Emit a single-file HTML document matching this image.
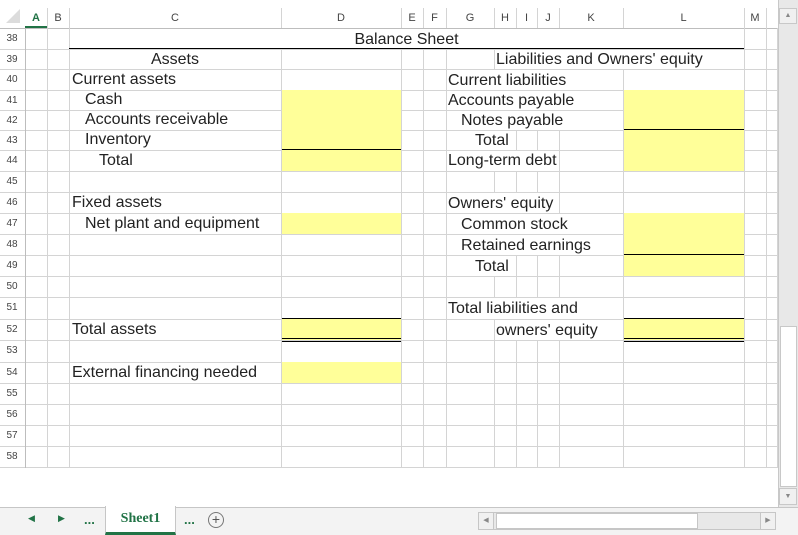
<!DOCTYPE html>
<html><head><meta charset="utf-8"><style>
*{margin:0;padding:0;box-sizing:border-box}
body{width:798px;height:535px;overflow:hidden;background:#fff;font-family:"Liberation Sans",Arial,sans-serif;position:relative}
.a{position:absolute}
.h{position:absolute;height:1px;background:#d4d4d4}
.v{position:absolute;width:1px;background:#d4d4d4}
.y{position:absolute;background:#ffff99}
.k{position:absolute;height:1px;background:#000}
.t{position:absolute;font-size:16px;color:#222;white-space:nowrap;line-height:20px}
.ch{position:absolute;top:10px;font-size:11px;color:#444;text-align:center;line-height:16px}
.rh{position:absolute;left:0;width:24px;font-size:10px;color:#444;text-align:center;line-height:21px}
</style></head><body>
<div class="a" style="left:6px;top:9px;width:0;height:0;border-left:14px solid transparent;border-bottom:14px solid #dcdcdc"></div>
<div class="h" style="left:0;top:28px;width:777px;background:#bdbdbd"></div>
<div class="a" style="left:25px;top:26px;width:22px;height:2px;background:#217346"></div>
<div class="ch" style="left:25px;width:22px;color:#217346;font-weight:bold">A</div>
<div class="ch" style="left:47px;width:22px">B</div>
<div class="ch" style="left:69px;width:212px">C</div>
<div class="ch" style="left:281px;width:120px">D</div>
<div class="ch" style="left:401px;width:22px">E</div>
<div class="ch" style="left:423px;width:23px">F</div>
<div class="ch" style="left:446px;width:48px">G</div>
<div class="ch" style="left:494px;width:22px">H</div>
<div class="ch" style="left:516px;width:21px">I</div>
<div class="ch" style="left:537px;width:22px">J</div>
<div class="ch" style="left:559px;width:64px">K</div>
<div class="ch" style="left:623px;width:121px">L</div>
<div class="ch" style="left:744px;width:22px">M</div>
<div class="v" style="left:47px;top:8px;height:20px"></div>
<div class="v" style="left:69px;top:8px;height:20px"></div>
<div class="v" style="left:281px;top:8px;height:20px"></div>
<div class="v" style="left:401px;top:8px;height:20px"></div>
<div class="v" style="left:423px;top:8px;height:20px"></div>
<div class="v" style="left:446px;top:8px;height:20px"></div>
<div class="v" style="left:494px;top:8px;height:20px"></div>
<div class="v" style="left:516px;top:8px;height:20px"></div>
<div class="v" style="left:537px;top:8px;height:20px"></div>
<div class="v" style="left:559px;top:8px;height:20px"></div>
<div class="v" style="left:623px;top:8px;height:20px"></div>
<div class="v" style="left:744px;top:8px;height:20px"></div>
<div class="v" style="left:766px;top:8px;height:20px"></div>

<div class="h" style="left:0;top:49px;width:777px"></div>
<div class="h" style="left:0;top:69px;width:777px"></div>
<div class="h" style="left:0;top:90px;width:777px"></div>
<div class="h" style="left:0;top:110px;width:777px"></div>
<div class="h" style="left:0;top:130px;width:777px"></div>
<div class="h" style="left:0;top:150px;width:777px"></div>
<div class="h" style="left:0;top:171px;width:777px"></div>
<div class="h" style="left:0;top:192px;width:777px"></div>
<div class="h" style="left:0;top:213px;width:777px"></div>
<div class="h" style="left:0;top:234px;width:777px"></div>
<div class="h" style="left:0;top:255px;width:777px"></div>
<div class="h" style="left:0;top:276px;width:777px"></div>
<div class="h" style="left:0;top:297px;width:777px"></div>
<div class="h" style="left:0;top:319px;width:777px"></div>
<div class="h" style="left:0;top:340px;width:777px"></div>
<div class="h" style="left:0;top:362px;width:777px"></div>
<div class="h" style="left:0;top:383px;width:777px"></div>
<div class="h" style="left:0;top:404px;width:777px"></div>
<div class="h" style="left:0;top:425px;width:777px"></div>
<div class="h" style="left:0;top:446px;width:777px"></div>
<div class="h" style="left:0;top:467px;width:777px"></div>

<div class="v" style="left:25px;top:28px;height:440px;background:#bdbdbd"></div>
<div class="v" style="left:47px;top:28px;height:440px"></div>
<div class="v" style="left:69px;top:28px;height:440px"></div>
<div class="v" style="left:281px;top:49px;height:419px"></div>
<div class="v" style="left:401px;top:49px;height:419px"></div>
<div class="v" style="left:423px;top:49px;height:419px"></div>
<div class="v" style="left:446px;top:49px;height:419px"></div>
<div class="v" style="left:494px;top:49px;height:20px"></div>
<div class="v" style="left:494px;top:171px;height:21px"></div>
<div class="v" style="left:494px;top:276px;height:21px"></div>
<div class="v" style="left:494px;top:319px;height:149px"></div>
<div class="v" style="left:516px;top:130px;height:20px"></div>
<div class="v" style="left:516px;top:171px;height:21px"></div>
<div class="v" style="left:516px;top:255px;height:42px"></div>
<div class="v" style="left:516px;top:340px;height:128px"></div>
<div class="v" style="left:537px;top:130px;height:20px"></div>
<div class="v" style="left:537px;top:171px;height:21px"></div>
<div class="v" style="left:537px;top:255px;height:42px"></div>
<div class="v" style="left:537px;top:340px;height:128px"></div>
<div class="v" style="left:559px;top:130px;height:83px"></div>
<div class="v" style="left:559px;top:255px;height:42px"></div>
<div class="v" style="left:559px;top:340px;height:128px"></div>
<div class="v" style="left:623px;top:69px;height:399px"></div>
<div class="v" style="left:744px;top:28px;height:440px"></div>
<div class="v" style="left:766px;top:28px;height:440px"></div>
<div class="v" style="left:777px;top:28px;height:440px"></div>

<div class="y" style="left:282px;top:90px;width:119px;height:81px"></div>
<div class="y" style="left:282px;top:213px;width:119px;height:21px"></div>
<div class="y" style="left:282px;top:319px;width:119px;height:21px"></div>
<div class="y" style="left:282px;top:362px;width:119px;height:21px"></div>
<div class="y" style="left:624px;top:90px;width:120px;height:81px"></div>
<div class="y" style="left:624px;top:213px;width:120px;height:63px"></div>
<div class="y" style="left:624px;top:319px;width:120px;height:21px"></div>

<div class="k" style="left:69px;top:48px;width:675px"></div>
<div class="k" style="left:282px;top:149px;width:119px"></div>
<div class="k" style="left:282px;top:318px;width:119px"></div>
<div class="k" style="left:282px;top:338px;width:119px"></div>
<div class="k" style="left:282px;top:341px;width:119px"></div>
<div class="k" style="left:624px;top:129px;width:120px"></div>
<div class="k" style="left:624px;top:254px;width:120px"></div>
<div class="k" style="left:624px;top:318px;width:120px"></div>
<div class="k" style="left:624px;top:338px;width:120px"></div>
<div class="k" style="left:624px;top:341px;width:120px"></div>

<div class="rh" style="top:28px">38</div>
<div class="rh" style="top:49px">39</div>
<div class="rh" style="top:69px">40</div>
<div class="rh" style="top:90px">41</div>
<div class="rh" style="top:110px">42</div>
<div class="rh" style="top:130px">43</div>
<div class="rh" style="top:150px">44</div>
<div class="rh" style="top:171px">45</div>
<div class="rh" style="top:192px">46</div>
<div class="rh" style="top:213px">47</div>
<div class="rh" style="top:234px">48</div>
<div class="rh" style="top:255px">49</div>
<div class="rh" style="top:276px">50</div>
<div class="rh" style="top:297px">51</div>
<div class="rh" style="top:319px">52</div>
<div class="rh" style="top:340px">53</div>
<div class="rh" style="top:362px">54</div>
<div class="rh" style="top:383px">55</div>
<div class="rh" style="top:404px">56</div>
<div class="rh" style="top:425px">57</div>
<div class="rh" style="top:446px">58</div>

<div class="t" style="left:69px;width:675px;top:30px;text-align:center">Balance Sheet</div>
<div class="t" style="left:69px;width:212px;top:50px;text-align:center">Assets</div>
<div class="t" style="left:496px;top:50px">Liabilities and Owners' equity</div>
<div class="t" style="left:72px;top:70px">Current assets</div>
<div class="t" style="left:85px;top:90px">Cash</div>
<div class="t" style="left:85px;top:110px">Accounts receivable</div>
<div class="t" style="left:85px;top:130px">Inventory</div>
<div class="t" style="left:99px;top:151px">Total</div>
<div class="t" style="left:72px;top:193px">Fixed assets</div>
<div class="t" style="left:85px;top:214px">Net plant and equipment</div>
<div class="t" style="left:72px;top:320px">Total assets</div>
<div class="t" style="left:72px;top:363px">External financing needed</div>
<div class="t" style="left:448px;top:71px">Current liabilities</div>
<div class="t" style="left:448px;top:91px">Accounts payable</div>
<div class="t" style="left:461px;top:111px">Notes payable</div>
<div class="t" style="left:475px;top:131px">Total</div>
<div class="t" style="left:448px;top:151px">Long-term debt</div>
<div class="t" style="left:448px;top:194px">Owners' equity</div>
<div class="t" style="left:461px;top:215px">Common stock</div>
<div class="t" style="left:461px;top:236px">Retained earnings</div>
<div class="t" style="left:475px;top:257px">Total</div>
<div class="t" style="left:448px;top:299px">Total liabilities and</div>
<div class="t" style="left:496px;top:321px">owners' equity</div>

<div class="a" style="left:778px;top:0;width:20px;height:507px;background:#e8e8e8;border-left:1px solid #c8c8c8"></div>
<div class="a" style="left:779px;top:8px;width:18px;height:16px;background:#f0f0f0;border:1px solid #c8c8c8;font-size:7px;color:#888;text-align:center;line-height:14px">▲</div>
<div class="a" style="left:780px;top:326px;width:17px;height:161px;background:#fff;border:1px solid #c8c8c8"></div>
<div class="a" style="left:779px;top:488px;width:18px;height:17px;background:#f0f0f0;border:1px solid #c8c8c8;font-size:7px;color:#888;text-align:center;line-height:15px">▼</div>

<div class="a" style="left:0;top:507px;width:798px;height:28px;background:#f3f3f3;border-top:1px solid #c6c6c6"></div>
<div class="a" style="left:28px;top:513px;font-size:9px;color:#217346">◀</div>
<div class="a" style="left:58px;top:513px;font-size:9px;color:#217346">▶</div>
<div class="a" style="left:84px;top:512px;font-size:13px;color:#217346;font-weight:bold">...</div>
<div class="a" style="left:105px;top:506px;width:71px;height:29px;background:#fff;border-left:1px solid #c6c6c6;border-right:1px solid #c6c6c6;border-bottom:3px solid #217346;text-align:center;font-family:'Liberation Serif',serif;font-weight:bold;font-size:14px;color:#217346;line-height:26px">Sheet1</div>
<div class="a" style="left:184px;top:512px;font-size:13px;color:#217346;font-weight:bold">...</div>
<div class="a" style="left:208px;top:512px;width:16px;height:16px;border:1px solid #777;border-radius:50%;text-align:center;font-size:14px;line-height:13px;color:#555">+</div>
<div class="a" style="left:478px;top:512px;width:298px;height:18px;background:#e8e8e8;border:1px solid #c6c6c6"></div>
<div class="a" style="left:479px;top:513px;width:15px;height:16px;background:#f0f0f0;border-right:1px solid #c6c6c6;font-size:7px;color:#888;text-align:center;line-height:16px">◀</div>
<div class="a" style="left:496px;top:513px;width:202px;height:16px;background:#fff;border:1px solid #c6c6c6"></div>
<div class="a" style="left:760px;top:513px;width:15px;height:16px;background:#f0f0f0;border-left:1px solid #c6c6c6;font-size:7px;color:#888;text-align:center;line-height:16px">▶</div>
</body></html>
